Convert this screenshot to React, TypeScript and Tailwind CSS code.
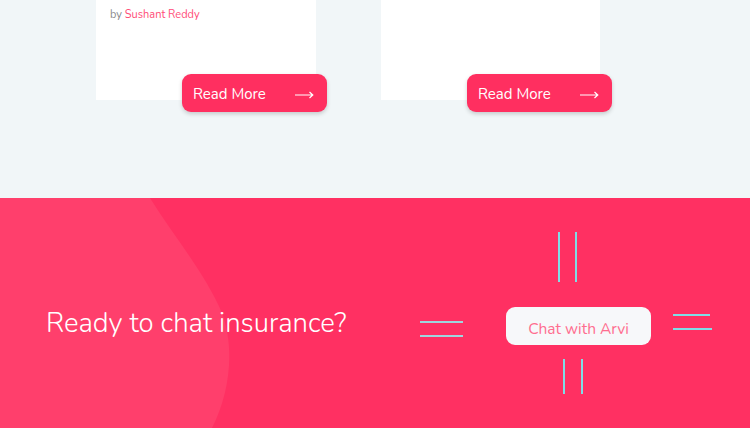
import React from "react";

function Arrow() {
  return (
    <svg width="19" height="8" viewBox="0 0 19 8" fill="none">
      <path d="M0 4H17.5M14.5 1L17.8 4L14.5 7" stroke="white" strokeWidth="1.2" />
    </svg>
  );
}

function Card({ author }: { author?: string }) {
  return (
    <div className="relative h-[100px] bg-white">
      {author && (
        <p className="pl-[14px] pt-[8px] text-[11px] leading-[14px] text-[#8a8a8a]">
          by <span className="text-[#ff4d78]">{author}</span>
        </p>
      )}
      <button className="absolute left-[86px] top-[74px] flex h-[38px] w-[145px] items-center justify-between rounded-[9px] bg-[#ff2f60] pl-[11px] pr-[13px] pt-[3px] text-[15px] text-white shadow-[0_2px_4px_rgba(0,0,0,0.18)]">
        <span>Read More</span>
        <Arrow />
      </button>
    </div>
  );
}

const V = "w-[2px] bg-[#7fdde6]";
const H = "h-[2px] bg-[#7fdde6]";

export default function App() {
  return (
    <div className="h-[428px] w-[750px] overflow-hidden font-['Nunito','Lato',sans-serif]">
      <section className="h-[198px] bg-[#f1f6f8]">
        <div className="grid grid-cols-[220px_219px] gap-x-[65px] pl-[96px]">
          <Card author="Sushant Reddy" />
          <Card />
        </div>
      </section>
      <section className="relative h-[230px] bg-[#ff3062]">
        <svg className="absolute left-0 top-0" width="260" height="230" viewBox="0 0 260 230">
          <path
            d="M0 0 H150 C175 40 205 75 222 115 C235 150 230 195 212 230 H0 Z"
            fill="#ff3f6c"
          />
        </svg>
        <div className="relative flex h-full">
          <h2 className="ml-[46px] self-center pt-[22px] text-[27.5px] font-light leading-none text-white">
            Ready to chat insurance?
          </h2>
          <div className="ml-auto mr-[38px] flex flex-col pt-[34px]">
            <div className="flex h-[50px] gap-[15px] pl-[138px]">
              <span className={V} />
              <span className={V} />
            </div>
            <div className="mt-[25px] flex items-center">
              <div className="mt-[5px] flex w-[43px] flex-col gap-[12px]">
                <span className="h-[2px] bg-[#9fd6de]" />
                <span className="h-[2px] bg-[#9fd6de]" />
              </div>
              <button className="ml-[43px] flex h-[38px] w-[145px] items-center justify-center rounded-[9px] bg-[#f7f8fa] pt-[5px] text-[15.5px] text-[#ff6d8f]">
                Chat with Arvi
              </button>
              <div className="mb-[8px] ml-[22px] flex w-[39px] flex-col items-start gap-[12px]">
                <span className={`${H} w-[37px]`} />
                <span className={`${H} w-[39px]`} />
              </div>
            </div>
            <div className="mt-[14px] flex h-[35px] gap-[16px] pl-[143px]">
              <span className={V} />
              <span className={V} />
            </div>
          </div>
        </div>
      </section>
    </div>
  );
}
